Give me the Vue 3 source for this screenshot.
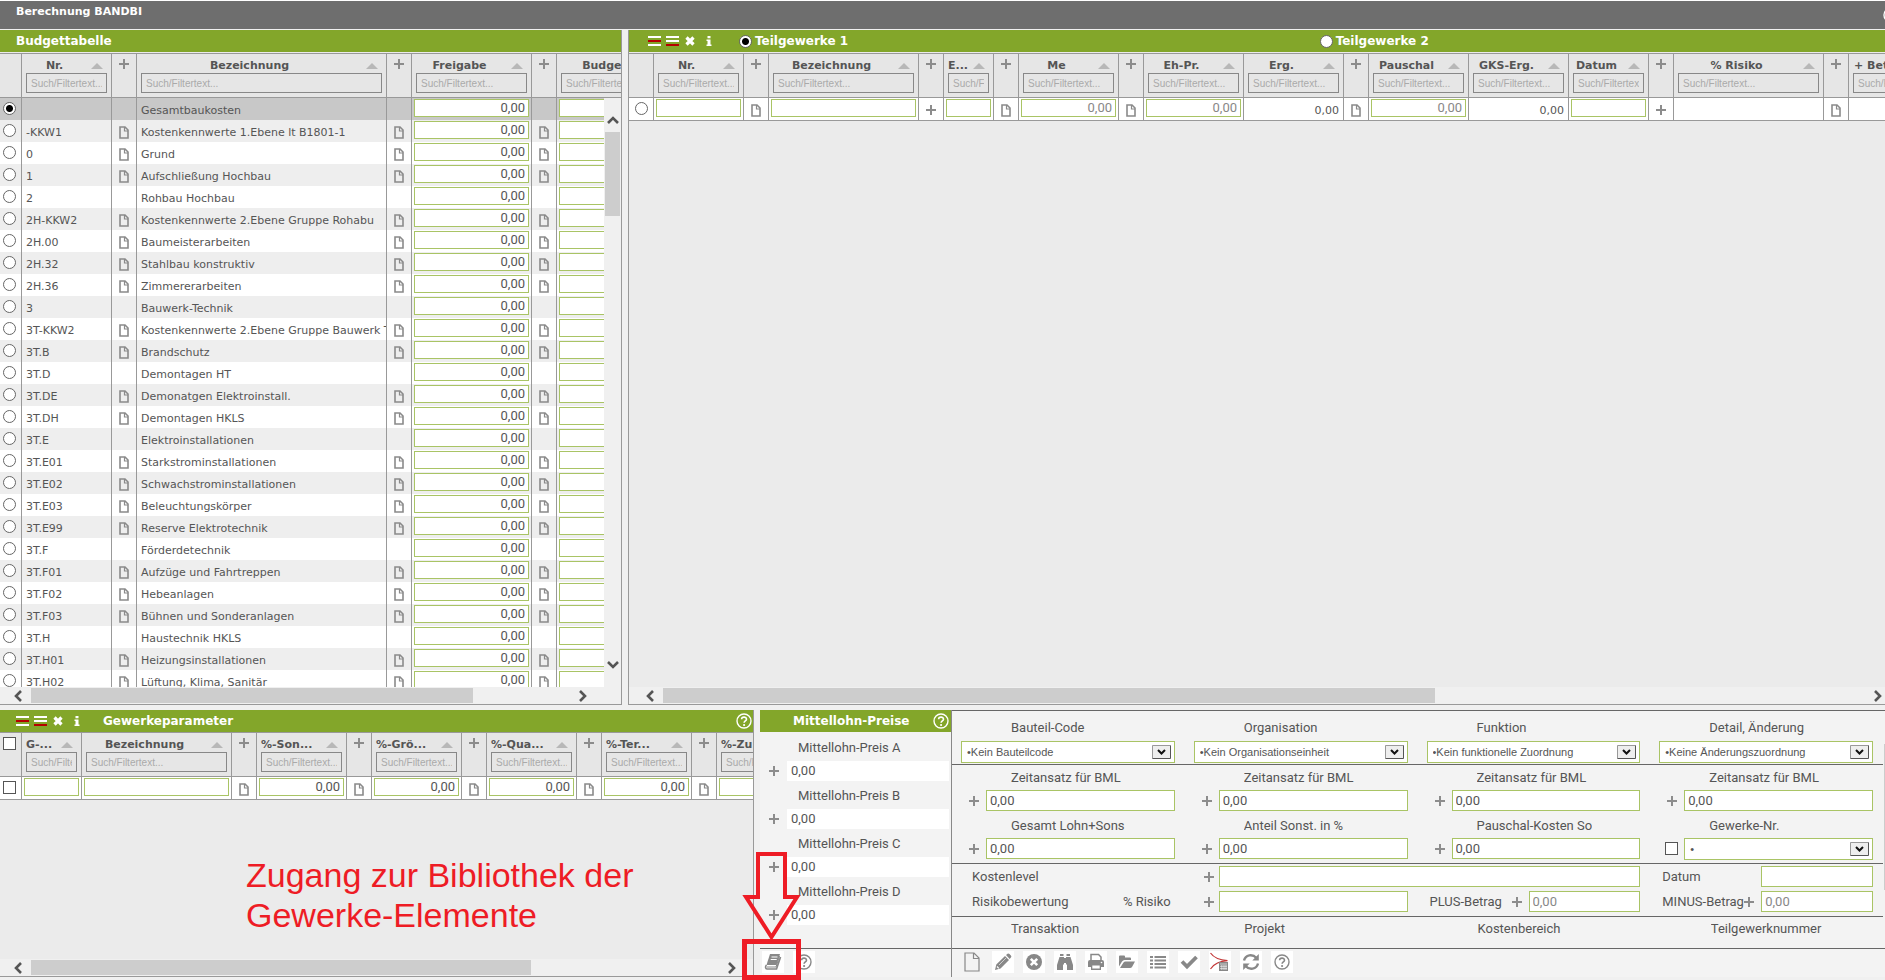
<script setup>
import { ref } from 'vue'

const row = (nr, name, file = true) => ({ nr, name, file })
const budgetRows = [
  row('', 'Gesamtbaukosten', false),
  row('-KKW1', 'Kostenkennwerte 1.Ebene lt B1801-1'),
  row('0', 'Grund'),
  row('1', 'Aufschließung Hochbau'),
  row('2', 'Rohbau Hochbau', false),
  row('2H-KKW2', 'Kostenkennwerte 2.Ebene Gruppe Rohabu'),
  row('2H.00', 'Baumeisterarbeiten'),
  row('2H.32', 'Stahlbau konstruktiv'),
  row('2H.36', 'Zimmererarbeiten'),
  row('3', 'Bauwerk-Technik', false),
  row('3T-KKW2', 'Kostenkennwerte 2.Ebene Gruppe Bauwerk T'),
  row('3T.B', 'Brandschutz'),
  row('3T.D', 'Demontagen HT', false),
  row('3T.DE', 'Demonatgen Elektroinstall.'),
  row('3T.DH', 'Demontagen HKLS'),
  row('3T.E', 'Elektroinstallationen', false),
  row('3T.E01', 'Starkstrominstallationen'),
  row('3T.E02', 'Schwachstrominstallationen'),
  row('3T.E03', 'Beleuchtungskörper'),
  row('3T.E99', 'Reserve Elektrotechnik'),
  row('3T.F', 'Förderdetechnik', false),
  row('3T.F01', 'Aufzüge und Fahrtreppen'),
  row('3T.F02', 'Hebeanlagen'),
  row('3T.F03', 'Bühnen und Sonderanlagen'),
  row('3T.H', 'Haustechnik HKLS', false),
  row('3T.H01', 'Heizungsinstallationen'),
  row('3T.H02', 'Lüftung, Klima, Sanitär')
]
const selected = ref(0)
const teil = ref(1)

const budgetCols = [
  { w: 22 }, { w: 90, title: 'Nr.' }, { w: 25, plus: true }, { w: 250, title: 'Bezeichnung' },
  { w: 25, plus: true }, { w: 120, title: 'Freigabe' }, { w: 25, plus: true }, { w: 120, title: 'Budget' }
]
const partCols = [
  { w: 25, cell: 'radio' },
  { w: 90, title: 'Nr.', cell: 'input' }, { w: 25, plus: true, cell: 'file' },
  { w: 150, title: 'Bezeichnung', cell: 'input' }, { w: 25, plus: true, cell: 'plus' },
  { w: 50, title: 'E...', cell: 'input' }, { w: 25, plus: true, cell: 'file' },
  { w: 100, title: 'Me', cell: 'input', val: '0,00' }, { w: 25, plus: true, cell: 'file' },
  { w: 100, title: 'Eh-Pr.', cell: 'input', val: '0,00' },
  { w: 100, title: 'Erg.', cell: 'text', val: '0,00' }, { w: 25, plus: true, cell: 'file' },
  { w: 100, title: 'Pauschal', cell: 'input', val: '0,00' },
  { w: 100, title: 'GKS-Erg.', cell: 'text', val: '0,00' },
  { w: 80, title: 'Datum', cell: 'input' }, { w: 25, plus: true, cell: 'plus' },
  { w: 150, title: '% Risiko', cell: 'text' }, { w: 25, plus: true, cell: 'file' },
  { w: 90, title: '+ Betrag', cell: 'text' }
]
const paramCols = [
  { w: 22, cell: 'check' },
  { w: 60, title: 'G-...', cell: 'input' }, { w: 150, title: 'Bezeichnung', cell: 'input' },
  { w: 25, plus: true, cell: 'file' }, { w: 90, title: '%-Son...', cell: 'input', val: '0,00' },
  { w: 25, plus: true, cell: 'file' }, { w: 90, title: '%-Grö...', cell: 'input', val: '0,00' },
  { w: 25, plus: true, cell: 'file' }, { w: 90, title: '%-Qua...', cell: 'input', val: '0,00' },
  { w: 25, plus: true, cell: 'file' }, { w: 90, title: '%-Ter...', cell: 'input', val: '0,00' },
  { w: 25, plus: true, cell: 'file' }, { w: 90, title: '%-Zu...', cell: 'input', val: '' }
]
const total = cols => cols.reduce((s, c) => s + c.w, 0)

const selects = [
  ['Bauteil-Code', '•Kein Bauteilcode'],
  ['Organisation', '•Kein Organisationseinheit'],
  ['Funktion', '•Kein funktionelle Zuordnung'],
  ['Detail, Änderung', '•Keine Änderungszuordnung']
]
const amounts = ['Gesamt Lohn+Sons', 'Anteil Sonst. in %', 'Pauschal-Kosten So']
const tools = [
  ['page', 'Neu'], ['pencil', 'Bearbeiten'], ['cross', 'Löschen'], ['binoculars', 'Suchen'],
  ['printer', 'Drucken'], ['folder', 'Öffnen'], ['list', 'Liste'], ['check', 'Übernehmen'],
  ['calc', 'Kalkulation'], ['refresh', 'Aktualisieren'], ['help', 'Hilfe']
]
</script>

<template>
  <div class="page">
    <svg class="defs" aria-hidden="true">
      <symbol id="file" viewBox="0 0 10 13">
        <path d="M1 1h5l3 3v8H1z" fill="none" stroke="#8a8a8a" stroke-width="1.6" />
        <path d="M5.5 1v4H9" fill="none" stroke="#8a8a8a" stroke-width="1.2" />
      </symbol>
      <symbol id="plus" viewBox="0 0 10 10">
        <path d="M5 0v10M0 5h10" stroke="#8c8c8c" stroke-width="2" />
      </symbol>
      <symbol id="sort" viewBox="0 0 12 6"><path d="M0 6L6 0l6 6z" fill="#b8b8b8" /></symbol>
      <symbol id="chev" viewBox="0 0 10 12">
        <path d="M8 1L3 6l5 5" fill="none" stroke="#555" stroke-width="2.6" />
      </symbol>
      <symbol id="insA" viewBox="0 0 13 11">
        <path d="M0 1h13M0 9h13" stroke="#fff" stroke-width="2" /><path d="M0 5h13" stroke="#b50000" stroke-width="2" />
      </symbol>
      <symbol id="insB" viewBox="0 0 13 11">
        <path d="M0 1h13M0 5h13" stroke="#fff" stroke-width="2" /><path d="M0 9h13" stroke="#b50000" stroke-width="2" />
      </symbol>
      <symbol id="del" viewBox="0 0 10 10">
        <path d="M1.500 1.500l7 7M8.500 1.500l-7 7" stroke="#fff" stroke-width="3.200" />
      </symbol>
      <symbol id="info" viewBox="0 0 6 10">
        <path d="M1.500 0h3v2.200h-3zM.5 3.500h4V8.500H5.500V10H.5V8.500H1.500V5H.5z" fill="#fff" />
      </symbol>
      <symbol id="q" viewBox="0 0 16 16">
        <circle cx="8" cy="8" r="7" fill="none" stroke="currentColor" stroke-width="1.400" />
        <path d="M5.600 6.300C5.600 3.300 10.500 3.400 10.500 6.200c0 1.800-2.400 1.700-2.400 3.600" fill="none" stroke="currentColor" stroke-width="1.600" />
        <circle cx="8.100" cy="12" r="1.100" fill="currentColor" />
      </symbol>
    </svg>

    <header class="topbar">
      <h1>Berechnung BANDBI</h1>
      <svg class="q clipq"><use href="#q" /></svg>
    </header>

    <main class="upper">
      <section class="panel budget">
        <div class="bar"><h2>Budgettabelle</h2></div>
        <div class="view">
          <table :style="{ width: total(budgetCols) + 'px' }">
            <colgroup><col v-for="(c, i) in budgetCols" :key="i" :style="{ width: c.w + 'px' }"></colgroup>
            <thead>
              <tr>
                <th v-for="(c, i) in budgetCols" :key="i">
                  <template v-if="c.title">
                    <div class="cap"><span>{{ c.title }}</span><svg class="sort"><use href="#sort" /></svg></div>
                    <input class="filter" placeholder="Such/Filtertext..." :aria-label="'Filter ' + c.title">
                  </template>
                  <svg v-else-if="c.plus" class="plus"><use href="#plus" /></svg>
                </th>
              </tr>
            </thead>
            <tbody>
              <tr v-for="(r, i) in budgetRows" :key="i" :class="{ sel: selected === i }">
                <td class="mid"><input v-model="selected" type="radio" name="budget" :value="i" :aria-label="r.name"></td>
                <td>{{ r.nr }}</td>
                <td class="ic"><svg v-if="r.file" class="file"><use href="#file" /></svg></td>
                <td>{{ r.name }}</td>
                <td class="ic"><svg v-if="r.file" class="file"><use href="#file" /></svg></td>
                <td class="ed"><input class="val" value="0,00" :aria-label="'Freigabe ' + r.name"></td>
                <td class="ic"><svg v-if="r.file" class="file"><use href="#file" /></svg></td>
                <td class="ed"><input class="val" value="0,00" :aria-label="'Budget ' + r.name"></td>
              </tr>
            </tbody>
          </table>
          <div class="vscroll">
            <svg class="chev up"><use href="#chev" /></svg>
            <div class="vthumb"></div>
            <svg class="chev down"><use href="#chev" /></svg>
          </div>
        </div>
        <div class="hscroll hs1"><svg class="chev"><use href="#chev" /></svg><div class="thumb"></div><svg class="chev right"><use href="#chev" /></svg></div>
      </section>

      <section class="panel parts">
        <div class="bar tools">
          <svg class="ins"><use href="#insA" /></svg><svg class="ins"><use href="#insB" /></svg>
          <svg class="del"><use href="#del" /></svg><svg class="info"><use href="#info" /></svg>
          <div class="tabs">
            <label><input v-model="teil" type="radio" name="teil" :value="1">Teilgewerke 1</label>
            <label><input v-model="teil" type="radio" name="teil" :value="2">Teilgewerke 2</label>
          </div>
        </div>
        <div class="view">
          <table :style="{ width: total(partCols) + 'px' }">
            <colgroup><col v-for="(c, i) in partCols" :key="i" :style="{ width: c.w + 'px' }"></colgroup>
            <thead>
              <tr>
                <th v-for="(c, i) in partCols" :key="i">
                  <template v-if="c.title">
                    <div class="cap"><span>{{ c.title }}</span><svg class="sort"><use href="#sort" /></svg></div>
                    <input class="filter" placeholder="Such/Filtertext..." :aria-label="'Filter ' + c.title">
                  </template>
                  <svg v-else-if="c.plus" class="plus"><use href="#plus" /></svg>
                </th>
              </tr>
            </thead>
            <tbody>
              <tr class="single">
                <td v-for="(c, i) in partCols" :key="i" :class="{ ed: c.cell === 'input', ic: c.cell === 'file' || c.cell === 'plus', mid: c.cell === 'radio', num: c.cell === 'text' }">
                  <input v-if="c.cell === 'radio'" type="radio" name="part" aria-label="Zeile wählen">
                  <input v-else-if="c.cell === 'input'" class="val dim" :value="c.val" :aria-label="c.title">
                  <svg v-else-if="c.cell === 'file'" class="file"><use href="#file" /></svg>
                  <svg v-else-if="c.cell === 'plus'" class="plus"><use href="#plus" /></svg>
                  <template v-else>{{ c.val }}</template>
                </td>
              </tr>
            </tbody>
          </table>
        </div>
        <div class="hscroll hs2"><svg class="chev"><use href="#chev" /></svg><div class="thumb"></div><svg class="chev right"><use href="#chev" /></svg></div>
      </section>
    </main>

    <div class="lower">
      <section class="panel params">
        <div class="bar tools">
          <svg class="ins"><use href="#insA" /></svg><svg class="ins"><use href="#insB" /></svg>
          <svg class="del"><use href="#del" /></svg><svg class="info"><use href="#info" /></svg>
          <h2>Gewerkeparameter</h2>
          <svg class="q"><use href="#q" /></svg>
        </div>
        <div class="view tight">
          <table :style="{ width: total(paramCols) + 'px' }">
            <colgroup><col v-for="(c, i) in paramCols" :key="i" :style="{ width: c.w + 'px' }"></colgroup>
            <thead>
              <tr>
                <th v-for="(c, i) in paramCols" :key="i">
                  <template v-if="c.title">
                    <div class="cap" :class="{ cut: c.title.endsWith('...') }"><span>{{ c.title }}</span><svg class="sort"><use href="#sort" /></svg></div>
                    <input class="filter" placeholder="Such/Filtertext..." :aria-label="'Filter ' + c.title">
                  </template>
                  <svg v-else-if="c.plus" class="plus"><use href="#plus" /></svg>
                  <input v-else type="checkbox" aria-label="Alle wählen">
                </th>
              </tr>
            </thead>
            <tbody>
              <tr class="single">
                <td v-for="(c, i) in paramCols" :key="i" :class="{ ed: c.cell === 'input', ic: c.cell === 'file', mid: c.cell === 'check' }">
                  <input v-if="c.cell === 'check'" type="checkbox" aria-label="Zeile wählen">
                  <input v-else-if="c.cell === 'input'" class="val" :value="c.val" :aria-label="c.title">
                  <svg v-else class="file"><use href="#file" /></svg>
                </td>
              </tr>
            </tbody>
          </table>
        </div>
        <div class="hscroll hs3"><svg class="chev"><use href="#chev" /></svg><div class="thumb"></div><svg class="chev right"><use href="#chev" /></svg></div>
      </section>

      <section class="wages">
        <div class="bar"><h2>Mittellohn-Preise</h2><svg class="q"><use href="#q" /></svg></div>
        <div class="wagelist">
          <div v-for="l in ['A', 'B', 'C', 'D']" :key="l" class="wage">
            <label :for="'wage' + l">Mittellohn-Preis {{ l }}</label>
            <div class="line"><svg class="plus"><use href="#plus" /></svg><input :id="'wage' + l" value="0,00"></div>
          </div>
        </div>
        <div class="toolbar">
          <button type="button" aria-label="Bibliothek">
            <svg viewBox="0 0 22 22">
              <path d="M8 3h10L14.500 14H4.500z" fill="#888" />
              <path d="M9.500 6h6M8.700 8.500h6" stroke="#fff" stroke-width="1.200" />
              <path d="M4.500 14c-1.500 1.500-1 4 .5 4h9.500L18.500 6" fill="none" stroke="#888" stroke-width="1.700" />
              <path d="M5 16h9l3.500-11" fill="none" stroke="#888" stroke-width="1" />
            </svg>
          </button>
          <button type="button" aria-label="Hilfe"><svg class="q"><use href="#q" /></svg></button>
        </div>
      </section>

      <form class="details" @submit.prevent>
        <div class="sec s1">
          <div v-for="(s, i) in selects" :key="i" class="cell">
            <label :for="'sel' + i">{{ s[0] }}</label>
            <div class="drop">
              <select :id="'sel' + i"><option>{{ s[1] }}</option></select>
              <svg viewBox="0 0 19 14"><path d="M.5 13.500V.5h18" fill="none" stroke="#999" /><path d="M.5 13.500h18V.5" fill="none" stroke="#555" /><path d="M6 5l3.500 3.500L13 5" fill="none" stroke="#111" stroke-width="2" /></svg>
            </div>
          </div>
        </div>
        <div class="sec s2">
          <div v-for="i in 4" :key="i" class="cell">
            <label :for="'zeit' + i">Zeitansatz für BML</label>
            <div class="line"><svg class="plus"><use href="#plus" /></svg><input :id="'zeit' + i" value="0,00"></div>
          </div>
          <div v-for="a in amounts" :key="a" class="cell">
            <label :for="a">{{ a }}</label>
            <div class="line"><svg class="plus"><use href="#plus" /></svg><input :id="a" value="0,00"></div>
          </div>
          <div class="cell">
            <label for="gewnr">Gewerke-Nr.</label>
            <div class="line pick">
              <input type="checkbox" aria-label="Gewerke-Nr. aktiv">
              <div class="drop">
                <select id="gewnr"><option>•</option></select>
                <svg viewBox="0 0 19 14"><path d="M.5 13.500V.5h18" fill="none" stroke="#999" /><path d="M.5 13.500h18V.5" fill="none" stroke="#555" /><path d="M6 5l3.500 3.500L13 5" fill="none" stroke="#111" stroke-width="2" /></svg>
              </div>
            </div>
          </div>
        </div>
        <div class="sec s3">
          <div class="cell lead"><label for="level">Kostenlevel</label></div>
          <div class="cell wide"><div class="line"><svg class="plus"><use href="#plus" /></svg><input id="level"></div></div>
          <div class="cell pair"><label for="datum">Datum</label><span class="plus"></span><input id="datum"></div>
          <div class="cell lead"><label for="risk">Risikobewertung</label><span>% Risiko</span></div>
          <div class="cell"><div class="line"><svg class="plus"><use href="#plus" /></svg><input id="risk"></div></div>
          <div class="cell pair"><label for="pb">PLUS-Betrag</label><svg class="plus"><use href="#plus" /></svg><input id="pb" class="dim" value="0,00"></div>
          <div class="cell pair"><label for="mb">MINUS-Betrag</label><svg class="plus"><use href="#plus" /></svg><input id="mb" class="dim" value="0,00"></div>
        </div>
        <div class="sec s4">
          <div v-for="t in ['Transaktion', 'Projekt', 'Kostenbereich', 'Teilgewerknummer']" :key="t" class="cell"><span class="lbl">{{ t }}</span></div>
        </div>
        <div class="toolbar">
          <button v-for="t in tools" :key="t[0]" type="button" :class="t[0]" :aria-label="t[1]">
            <svg v-if="t[0] === 'help'" class="q"><use href="#q" /></svg>
            <svg v-else viewBox="0 0 22 22">
              <path v-if="t[0] === 'page'" d="M4 2h9l5 5v13H4zM12.500 2v5.500H18" fill="none" stroke="#888" stroke-width="1.200" />
              <g v-else-if="t[0] === 'pencil'" fill="#888">
                <path d="M3 19l1.300-5.500L13 5l4 4-8.500 8.500zM14 4l1.500-1.300q1-.7 2 .2l1.400 1.500q1 1 0 2L17.700 8z" />
                <path d="M5 15.500l1.800 1.800" stroke="#fff" stroke-width="1.200" /><path d="M7 14l7-7" stroke="#fff" stroke-width=".6" />
              </g>
              <g v-else-if="t[0] === 'cross'"><circle cx="11" cy="11" r="8" fill="#888" /><path d="M7.800 7.800l6.400 6.400M14.200 7.800l-6.400 6.400" stroke="#fff" stroke-width="2.600" /></g>
              <g v-else-if="t[0] === 'binoculars'" fill="#888">
                <path d="M6 3h3.500v2H6zM12.500 3H16v2h-3.500zM5.500 6H10v7.500H9V19H3v-5zM16.500 6H12v7.500h1V19h6v-5zM10 7h2v5h-2z" />
              </g>
              <g v-else-if="t[0] === 'printer'">
                <path d="M6 10V3.500h7.500L16 6v4" fill="none" stroke="#888" stroke-width="1.500" />
                <path d="M5 9h12q2 0 2 2v5h-3v3H6v-3H3v-5q0-2 2-2z" fill="#888" /><path d="M7.300 14.500h7.400v3H7.300z" fill="#fff" /><circle cx="16.500" cy="11.500" r=".8" fill="#fff" />
              </g>
              <g v-else-if="t[0] === 'folder'" fill="#888">
                <path d="M3 15.500V5.500q0-1 1-1h4q1 0 1 1V6.500h5q1 0 1 1V9H8.500Q7 9 6 10.500zM4 17l3.500-5.500q.7-1 2-1H19L16 16q-.6 1-2 1z" />
              </g>
              <g v-else-if="t[0] === 'list'" stroke="#888" stroke-width="2.200"><path d="M3 6h3M3 9.500h3M3 13h3M3 16.500h3M7.500 6H19M7.500 9.500H19M7.500 13H19M7.500 16.500H19" /></g>
              <path v-else-if="t[0] === 'check'" d="M4 10.500l5 5L18.500 6" fill="none" stroke="#888" stroke-width="3.800" />
              <g v-else-if="t[0] === 'calc'">
                <path d="M1.500 2C5 7 10 9 18.500 9.700C11 10 5 13 1.500 18" fill="none" stroke="#c23636" stroke-width="1.200" />
                <path d="M10 11h9v9h-9z" fill="#888" /><path d="M11 13h7M11 15.300h7M11 17.600h7M12.800 14v5M15 14v5M17 14v5" stroke="#fff" stroke-width=".6" />
              </g>
              <g v-else fill="none" stroke="#888" stroke-width="2.400">
                <path d="M4 9.500C5.500 3.500 12.500 2.500 16.500 7M18 12.500C16.500 18.500 9.500 19.500 5.500 15" /><path d="M18.800 3v6.500h-6.500zM3.200 19v-6.500h6.500z" fill="#888" stroke="none" />
              </g>
            </svg>
          </button>
        </div>
        <div class="edge"></div>
      </form>

      <p class="note">Zugang zur Bibliothek der<br>Gewerke-Elemente</p>
      <svg class="arrow" viewBox="0 0 60 130">
        <path d="M16 4h27v43h12L29.500 87 4 47h12z" fill="none" stroke="#ee1c25" stroke-width="4" />
        <path d="M2.500 91.500h54v36h-54z" fill="none" stroke="#ee1c25" stroke-width="5" />
      </svg>
    </div>
  </div>
</template>

<style>
body { margin: 0; background: #f0f0f0; }
</style>

<style scoped>
* { box-sizing: border-box; }
.page { height: 100vh; min-height: 600px; display: flex; flex-direction: column; overflow: hidden; background: #f0f0f0; color: #555; font: 11px/14px "DejaVu Sans", Verdana, sans-serif; }
.defs { position: absolute; width: 0; height: 0; }
input, select, button { font: inherit; color: inherit; margin: 0; border-radius: 0; outline: 0; }
svg { display: block; flex: none; }
.topbar { flex: none; height: 29px; margin-bottom: 1px; border-top: 1px solid #fff; background: #6e6e6e; position: relative; overflow: hidden; }
h1, h2 { margin: 0; font: bold 12px/22px "DejaVu Sans", Verdana, sans-serif; color: #fff; white-space: nowrap; }
h1 { padding-left: 16px; font-size: 11px; }
.q { width: 16px; height: 16px; color: #fff; }
.clipq { position: absolute; right: -14px; top: 6px; }
.upper { flex: 1; min-height: 0; display: flex; gap: 6px; }
.panel { display: flex; flex-direction: column; min-width: 0; border-bottom: 1px solid #999; background: #ebebeb; }
.budget { flex: none; width: 622px; border-right: 1px solid #999; }
.parts { flex: 1; border-left: 1px solid #999; }
.bar { flex: none; height: 22px; background: #83a62a; display: flex; align-items: center; }
.budget .bar { padding-left: 16px; }
.tools { gap: 5px; padding-left: 16px; }
.parts .tools { padding-left: 19px; }
.ins { width: 13px; height: 11px; }
.del { width: 10px; height: 10px; margin-left: 1px; }
.info { width: 6px; height: 10px; margin-left: 6px; }
.params h2 { margin-left: 18px; flex: 1; }
.params .q { margin-right: 1px; }
.tabs { flex: 1; display: grid; grid-template-columns: 38fr 37fr; margin-left: 22px; }
.tabs label { display: flex; align-items: center; gap: 3px; font-size: 12px; font-weight: bold; color: #fff; }
.view { flex: 1; min-height: 0; overflow: hidden; position: relative; margin-top: 1px; border-top: 1px solid #999; }
.view.tight { margin-top: 0; }

table { table-layout: fixed; border-collapse: separate; border-spacing: 0; }
th { height: 44px; padding: 3px 4px 0 4px; vertical-align: top; background: #e6e6e6; border-right: 1px solid #999; border-bottom: 1px solid #999; }
.cap { height: 16px; display: flex; align-items: center; white-space: nowrap; }
.cap span { flex: 1; min-width: 0; text-align: center; line-height: 18px; padding-top: 1px; }
.cut span { text-align: left; }
.sort { width: 12px; height: 6px; margin: 2px 4px 0 8px; }
.filter { display: block; width: 100%; height: 20px; padding: 0 4px; border: 1px solid #888; background: #e6e6e6; font: 10px "Liberation Sans", Arial, sans-serif; }
.filter::placeholder { color: #aaa; opacity: 1; }
.plus { width: 10px; height: 10px; flex: none; }
th .plus { margin: 2px auto 0; }
td { height: 22px; padding: 2px 4px 0; background: #fff; border-right: 1px solid #999; white-space: nowrap; overflow: hidden; line-height: 20px; vertical-align: top; }
tbody tr:nth-child(even) td { background: #eee; }
tbody tr.sel td { background: #c8c8c8; }
.budget td:not(.mid):not(.ic):not(.ed), td.num { padding-top: 3px; line-height: 19px; }
.single td { height: 23px; border-bottom: 1px solid #999; }
td.num { text-align: right; }
td.ic { padding: 6px 0 0; }
td .file { width: 10px; height: 13px; margin: 0 auto; }
td .plus { margin: 1px auto 0; }
td.ed { padding: 1px 2px 0; }
td.mid { padding: 4px 0 0 3px; border-right-color: #999; }
.parts td.mid { padding-left: 6px; }
.val { display: block; width: 100%; height: 18px; padding: 0 3px 2px; border: 1px solid #a9c465; background: #fff; text-align: right; font: 13px/14px Roboto, "Noto Sans", sans-serif; }
.dim { color: #888; }
input[type="radio"] { appearance: none; display: block; width: 13px; height: 13px; border: 1px solid #666; border-radius: 50%; background: #fff; }
input[type="radio"]:checked { background: radial-gradient(circle, #000 0 3px, #fff 4px); }
input[type="checkbox"] { appearance: none; display: block; flex: none; width: 13px; height: 13px; border: 1px solid #555; background: #fff; }
th input[type="checkbox"] { margin: 1px 0 0 -1px; }

.vscroll { position: absolute; top: 44px; right: 0; bottom: 0; width: 17px; padding: 16px 1px; background: #f0f0f0; display: flex; flex-direction: column; align-items: center; }
.vthumb { flex: none; width: 15px; height: 84px; margin-top: 6px; background: #cdcdcd; }
.up { transform: rotate(90deg); }
.down { transform: rotate(-90deg); margin-top: auto; }
.chev { width: 10px; height: 12px; flex: none; }
.right { transform: rotate(180deg); margin-left: auto; }
.hscroll { flex: none; height: 17px; background: #f0f0f0; display: flex; align-items: center; padding-left: 13px; }
.thumb { height: 15px; margin-left: 8px; background: #cdcdcd; }
.hs1 { padding-right: 33px; }
.hs1 .thumb { width: 442px; }
.hs2 { padding: 0 2px 0 16px; }
.hs2 .thumb { width: calc(62% + 4px); }
.hs3 { padding-right: 16px; }
.hs3 .thumb { width: 500px; }

.lower { flex: none; position: relative; display: flex; margin-top: 5px; padding-bottom: 3px; }
.params { flex: none; width: 754px; border-right: 1px solid #999; }
.wages { flex: none; width: 192px; margin-left: 6px; background: #f3f3f3; border-right: 1px solid #888; font: 13px/20px Roboto, "Noto Sans", sans-serif; display: flex; flex-direction: column; }
.wages h2 { flex: 1; padding-left: 33px; }
.wages .q { margin-right: 2px; }
.wagelist { flex: 1; padding: 6px 2px 0 9px; border-bottom: 1px solid #666; }
.wage { margin-bottom: 5px; }
.wage label { display: block; padding-left: 29px; margin-bottom: 3px; }
.line { display: flex; align-items: center; }
.wage input { flex: 1; min-width: 0; height: 20px; margin-left: 8px; padding: 0 4px; border: 0; background: #fff; }
.toolbar { flex: none; height: 28px; display: flex; gap: 9px; padding: 2px 0 0 2px; }
.toolbar button { width: 22px; height: 22px; padding: 0; border: 0; background: #fff; }
.toolbar button.page { background: transparent; min-height: 0; height: 22px; overflow: visible; display: block; }
.toolbar svg { width: 22px; height: 22px; }
.toolbar .q { width: 16px; height: 16px; margin: 0 auto; color: #888; }

.details { flex: 1; min-width: 0; position: relative; background: #f3f3f3; border-top: 1px solid #666; font: 13px/20px Roboto, "Noto Sans", sans-serif; }
.sec { display: grid; grid-template-columns: repeat(4, 1fr); margin-right: 2px; border-bottom: 1px solid #666; }
.cell { min-width: 0; padding: 0 10px 0 9px; }
.s1 label, .s2 label, .lbl { display: block; width: 115px; margin-left: 50px; white-space: nowrap; overflow: hidden; }
.s1 { padding: 7px 0 1px; }
.s1 label { margin-bottom: 3px; }
.s2 { padding: 3px 0 4px; row-gap: 5px; }
.s2 label { margin-bottom: 2px; }
.s2 .line { padding-left: 8px; height: 21px; }
.s2 .line > input:not([type="checkbox"]) { margin-left: 7px; }
.details input:not([type="checkbox"]) { flex: 1; min-width: 0; width: 100%; height: 21px; padding: 0 3px 1px; border: 1px solid #a9c465; background: #fff; }
.drop { flex: 1; position: relative; height: 22px; }
.drop select { appearance: none; display: block; width: 100%; height: 100%; padding: 0 30px 0 5px; border: 1px solid #a9c465; background: #fff; font: 11px "Liberation Sans", Arial, sans-serif; }
.drop svg { position: absolute; right: 4px; top: 4px; width: 19px; height: 14px; background: #eee; pointer-events: none; }
.s2 .pick { padding-left: 6px; }
.pick .drop { margin-left: 6px; }
.s3 { padding: 2px 0 4px; row-gap: 4px; }
.wide { grid-column: span 2; }
.s3 .cell { display: flex; align-items: center; }
.s3 .line { flex: 1; padding-left: 10px; }
.s3 .line input { margin-left: 5px; }
.s3 .lead { padding-left: 20px; justify-content: space-between; padding-right: 14px; }
.s3 .pair { padding-left: 12px; }
.s3 .pair label { width: 82px; white-space: nowrap; flex: none; }
.s3 .pair input { margin-left: 7px; }
.s4 { padding: 2px 0 9px; margin-right: 0; }
.details .toolbar { padding-left: 9px; }
.edge { position: absolute; right: 0; top: 33px; width: 1px; height: 146px; background: #ccc; }
.note { position: absolute; left: 246px; top: 145px; margin: 0; font: 34px/40px "Liberation Sans", Arial, sans-serif; color: #ee1c25; }
.arrow { position: absolute; left: 742px; top: 140px; width: 60px; height: 130px; }
</style>
